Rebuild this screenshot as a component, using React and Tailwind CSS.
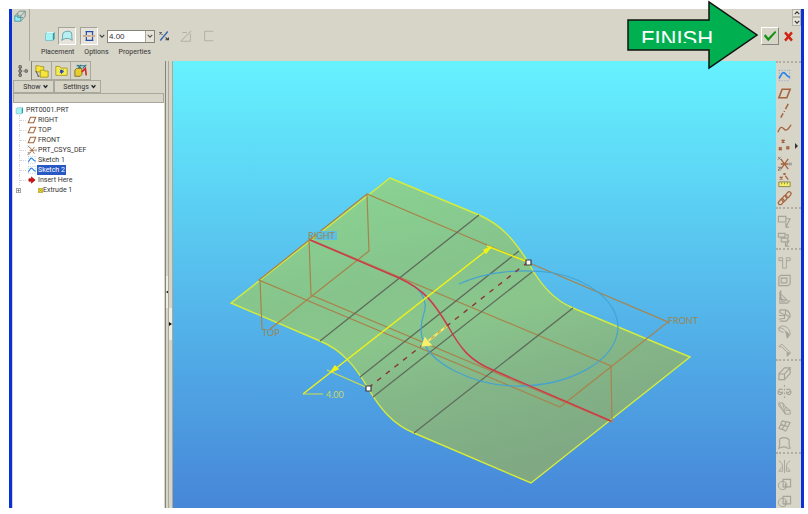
import React, { useState } from 'react';

const Icon = ({ children, className = 'size-4' }) => (
    <svg viewBox="0 0 16 16" className={className} fill="none" stroke="currentColor" strokeWidth="1">
        {children}
    </svg>
);

const PlaneIcon = ({ className }) => (
    <Icon className={className}>
        <path d="M5.5 3.5H14L10.5 12.5H2Z" stroke="#a5643c" strokeWidth="1.7" />
    </Icon>
);

const SketchIcon = ({ className }) => (
    <Icon className={className}>
        <path d="M2.5 2v12M13.5 2v12M2 2.5h12M2 13.5h12" stroke="#7d9cc8" strokeDasharray="1 2" />
        <path d="M2 11C4 10 4.500 5 7 5s3 5 7 5" stroke="#2a86e8" strokeWidth="1.800" />
    </Icon>
);

const CsysIcon = ({ className }) => (
    <Icon className={className}>
        <path d="M4 3l8 11M12 3L4 14M4 8.500h8" stroke="#a5643c" strokeWidth="1.400" />
        <path d="M1 1l3 3M4 1L1 4M1 12h3l-3 3h3M13 7v3M15 7v3" stroke="#777" />
    </Icon>
);

const PartIcon = ({ className }) => (
    <Icon className={className}>
        <path d="M2 4.500L4 2.500H14V12L12 14V4.500Z" fill="#0a8a94" stroke="none" />
        <path d="M2 4.500H12V14H2Z" fill="#a4f4f6" stroke="#6fb9c0" />
        <path d="M2 4.500L4 2.500H14L12 4.500Z" fill="#d8ffff" stroke="none" />
    </Icon>
);

const treeItems = [
    { name: 'RIGHT', icon: <PlaneIcon className="size-[10px]" /> },
    { name: 'TOP', icon: <PlaneIcon className="size-[10px]" /> },
    { name: 'FRONT', icon: <PlaneIcon className="size-[10px]" /> },
    { name: 'PRT_CSYS_DEF', icon: <CsysIcon className="size-[10px]" /> },
    { name: 'Sketch 1', icon: <SketchIcon className="size-[10px]" /> },
    { name: 'Sketch 2', icon: <SketchIcon className="size-[10px]" /> },
    {
        name: 'Insert Here',
        icon: (
            <Icon className="size-[10px]">
                <path d="M3 6h4V3l6 5-6 5v-3H3Z" fill="#d81010" stroke="#a00000" />
            </Icon>
        ),
    },
];

const toolGroups = [
    {
        color: 'text-[#a5643c]',
        height: 'h-[140px]',
        tools: [
            { name: 'Sketch', icon: <SketchIcon className="size-[15px]" /> },
            { name: 'Plane', icon: <PlaneIcon className="size-[15px]" /> },
            { name: 'Axis', icon: <Icon className="size-[15px]"><path d="M12 1L9 6.500M8 8.500L7.500 9.500M6.500 11L4 15.500" strokeWidth="1.600" /></Icon> },
            { name: 'Curve', icon: <Icon className="size-[15px]"><path d="M1 12C4 4 6 7 8 9s4 0 7-5" strokeWidth="1.500" /></Icon> },
            {
                name: 'Point',
                more: true,
                icon: (
                    <Icon className="size-[15px]">
                        <path d="M5 2l3 3M8 2L5 5M2 10l3 3M5 10l-3 3M10 9l3 3M13 9l-3 3" strokeWidth="1.700" />
                    </Icon>
                ),
            },
            { name: 'Coordinate System', icon: <CsysIcon className="size-[15px]" /> },
            {
                name: 'Analysis',
                icon: (
                    <Icon className="size-[15px]">
                        <path d="M7 0l2 2M9 0L7 2M3 4l3 3M6 4L3 7M9 3l3 4" strokeWidth="1.400" />
                        <path d="M2 9.500h12v5H2Z" fill="#f4f06a" stroke="#85854c" />
                        <path d="M5 10v2M8 10v2M11 10v2" stroke="#85854c" />
                    </Icon>
                ),
            },
            {
                name: 'Reference',
                icon: (
                    <Icon className="size-[15px]">
                        <g strokeWidth="1.300">
                            <rect x="1" y="9.500" width="7" height="4" rx="2" transform="rotate(-50 4.500 11.500)" />
                            <rect x="4.500" y="6" width="7" height="4" rx="2" transform="rotate(-50 8 8)" />
                            <rect x="8.500" y="2" width="7" height="4" rx="2" transform="rotate(-50 12 4)" />
                        </g>
                    </Icon>
                ),
            },
        ],
    },
    {
        color: 'text-[#a5a498]',
        height: 'h-[35px]',
        tools: [
            { name: 'Annotation', icon: <Icon className="size-[15px]"><path d="M1.500 2.500h8v6h-8ZM10 5h4L10 13M9.500 9.500V14H13" strokeWidth="1.200" /></Icon> },
            { name: 'Annotation Set', icon: <Icon className="size-[15px]"><path d="M1.500 1.500h7v4h-7ZM4.500 6.500h7v4h-7ZM9 3h3v3M13 9l-3 5M9 11v4h4" strokeWidth="1.200" /></Icon> },
        ],
    },
    {
        color: 'text-[#a5a498]',
        height: 'h-[105px]',
        tools: [
            { name: 'Hole', icon: <Icon className="size-[15px]"><path d="M2 3h4v3M14 3h-4v3M6 6v8h4V6M2 3v3h4M14 3v3h-4" /></Icon> },
            { name: 'Shell', icon: <Icon className="size-[15px]"><path d="M2 4.500l2-2h10v9l-2 2H2ZM4.500 5.500h6v5h-6Z" strokeWidth="1.200" /></Icon> },
            { name: 'Rib', icon: <Icon className="size-[15px]"><path d="M3 2l1-1v9l7 1M3 2v12h8l3-3M4 4l8 8M5 8v4h4" strokeWidth="1.100" /></Icon> },
            { name: 'Draft', icon: <Icon className="size-[15px]"><path d="M3 2l6 0c3 1 5 4 5 7l-4 5H3M3 2v3l5 2v4l-6 1M9 2v5l4 2M2 8h6" strokeWidth="1.200" /></Icon> },
            { name: 'Round', icon: <Icon className="size-[15px]"><path d="M2 3l3-2c6 0 9 4 9 9l-3 4M2 3c5 0 7 3 8 7l1 4M2 3v3l5 2" /><path d="M10 7l3 3-2 4Z" fill="currentColor" /></Icon> },
            { name: 'Chamfer', icon: <Icon className="size-[15px]"><path d="M2 4l3-3 9 9-3 4M2 4h3l6 6v4" /><path d="M11 10l3 1-3 3Z" fill="currentColor" /></Icon> },
        ],
    },
    {
        color: 'text-[#a5a498]',
        height: 'h-[87px]',
        tools: [
            { name: 'Extrude', icon: <Icon className="size-[15px]"><path d="M2 8.500h6v6H2ZM2 8.500L8 2h6L8 8.500M14 2v6l-6 6.500" strokeWidth="1.200" /></Icon> },
            { name: 'Revolve', icon: <Icon className="size-[15px]"><path d="M8 1v2M8 5v2M8 9v2M8 13v2M6 6C2 4 0 8 2 11c3 1 4-1 4-3M10 6c4-2 6 2 4 5-3 1-4-1-4-3M2 8l4 2M14 8l-4 2" strokeWidth="1.200" /></Icon> },
            { name: 'Sweep', icon: <Icon className="size-[15px]"><path d="M2 2l4 0 3 4 5 4v4H9ZM2 2v3l7 9M6 2l3 12M9 6l1 4h4" /></Icon> },
            { name: 'Boundary Blend', icon: <Icon className="size-[15px]"><path d="M2 10C5 5 4 3 6 2c4 2 5 0 8 2-2 2-2 6-5 9-3-3-4-1-7-3ZM4 6c4 2 5 0 8 3M10 3C8 6 8 8 5 11" strokeWidth="1.200" /></Icon> },
            { name: 'Style', icon: <Icon className="size-[15px]"><path d="M2 13C4 9 2 6 3 3c4-2 8-1 10 1 0 3-1 5 1 9l-3 0c-3-3-6-1-9 0Z" strokeWidth="1.200" /></Icon> },
        ],
    },
    {
        color: 'text-[#a5a498]',
        height: 'h-[52px]',
        tools: [
            { name: 'Mirror', icon: <Icon className="size-[15px]"><path d="M8 1v14M2 2c4 2 4 5 4 11H2M14 2c-4 2-4 5-4 11h4M2 13l3-4M14 13l-3-4" /></Icon> },
            { name: 'Merge', icon: <Icon className="size-[15px]"><circle cx="6" cy="9" r="4.500" /><path d="M6.500 2.500h8v8h-8ZM9 7v6" strokeWidth="1.200" /></Icon> },
            { name: 'Trim', icon: <Icon className="size-[15px]"><circle cx="6" cy="9" r="4.500" /><path d="M6.500 2.500h8v8h-8ZM9 7v6" strokeWidth="1.200" /></Icon> },
        ],
    },
];

const Dashboard = () => {
    const [depth, setDepth] = useState('4.00');

    return (
        <header className="flex h-[52px] shrink-0 items-start">
            <div className="h-full w-[18px] border-r border-[#aaa89b] pt-px pl-0.5">
                <Icon className="size-3">
                    <path d="M1 8h8v7H1Z" fill="#8eeaf0" stroke="#4b9ca5" strokeWidth="1.200" />
                    <path d="M1 8L7 1.500h8L9 8M15 1.500V8L9 15M5 4v6h7" stroke="#6d8f93" strokeWidth="1.200" />
                </Icon>
            </div>
            <div className="flex flex-col pt-[18px] pl-[11px]">
                <div className="flex h-[18px] items-center">
                    <button aria-label="Solid" className="flex w-[17px] justify-center">
                        <PartIcon className="size-3" />
                    </button>
                    <button aria-label="Surface" className="flex h-[18px] w-[18px] items-center justify-center border border-[#a5a397] border-r-white border-b-white bg-[#e5e3da]">
                        <Icon className="size-[14px]">
                            <path d="M2 13C4 9 2 6 4 4c3-2 7-2 9 0 1 3 0 5 1 9-4-3-8-3-12 0Z" fill="#b8f0f2" stroke="#5a9ba4" />
                        </Icon>
                    </button>
                    <button aria-label="Symmetric depth" className="ml-1 flex h-[18px] w-[18px] items-center justify-center border border-[#a5a397] border-r-white border-b-white bg-[#e5e3da]">
                        <Icon className="size-[14px]">
                            <path d="M5 3v4M12 3v4M5 9v4M12 9v4M4 3h9M4 13h9" stroke="#2550a8" strokeWidth="1.400" />
                            <path d="M1 8h15" stroke="#b4642c" strokeDasharray="4 1" />
                        </Icon>
                    </button>
                    <button aria-label="Depth options" className="flex w-2 justify-center">
                        <Icon className="size-[6px]"><path d="M2 5l6 6 6-6" stroke="#444" strokeWidth="3" /></Icon>
                    </button>
                    <div className="ml-px flex h-[13px] w-12 border border-[#85847b] bg-white">
                        <input
                            aria-label="Depth"
                            value={depth}
                            onChange={(e) => setDepth(e.target.value)}
                            className="w-0 grow px-px text-[8px] leading-[11px] outline-none"
                        />
                        <button aria-label="Depth values" className="flex w-[9px] items-center justify-center border-l border-[#aaa89b] bg-[#e5e3da]">
                            <Icon className="size-[6px]"><path d="M2 5l6 6 6-6" stroke="#555" strokeWidth="3" /></Icon>
                        </button>
                    </div>
                    <button aria-label="Flip direction" className="ml-[3px]">
                        <Icon className="size-3">
                            <path d="M13 2L3 14" stroke="#3564b4" strokeWidth="1.800" />
                            <path d="M2 3l4 3M2 6l3-3M10 10l4 3M10 13h4v-3" stroke="#444" strokeWidth="1.400" />
                        </Icon>
                    </button>
                    <button aria-label="Remove material" disabled className="ml-[9px] text-[#b3b1a5]">
                        <Icon className="size-[14px]"><path d="M2 14L14 2M4 4h5M13 5v9H2" strokeWidth="1.200" /></Icon>
                    </button>
                    <button aria-label="Thicken" disabled className="ml-[9px] text-[#b3b1a5]">
                        <Icon className="size-[14px]"><path d="M13 2.500H3v11h10" strokeWidth="1.200" /></Icon>
                    </button>
                </div>
                <nav className="flex gap-[10px] pt-px font-['Roboto',sans-serif] text-[7px] leading-3">
                    <button>Placement</button>
                    <button>Options</button>
                    <button>Properties</button>
                </nav>
            </div>
            <div className="ml-auto flex items-center gap-1 pt-[18px]">
                <button aria-label="Accept" className="flex size-[18px] items-center justify-center border border-white border-r-[#85847b] border-b-[#85847b]">
                    <Icon className="size-[14px]"><path d="M1 8l2-2 3 4 8-8 1 2-9 10Z" fill="#12930f" stroke="none" /></Icon>
                </button>
                <button aria-label="Cancel" className="w-[10px]">
                    <Icon className="size-[11px]"><path d="M3 2l10 12M13 2L3 14" stroke="#d02412" strokeWidth="3.500" /></Icon>
                </button>
            </div>
            <div className="-ml-px flex flex-col">
                <button aria-label="Scroll up" className="flex h-2 w-[9px] items-center justify-center border border-[#b5b3a8] bg-[#e5e3da]">
                    <Icon className="size-[6px]"><path d="M2 11l6-6 6 6" stroke="#333" strokeWidth="3" /></Icon>
                </button>
                <button aria-label="Scroll down" className="flex h-[9px] w-[9px] items-center justify-center border border-[#b5b3a8] bg-[#e5e3da]">
                    <Icon className="size-[6px]"><path d="M2 5l6 6 6-6" stroke="#333" strokeWidth="3" /></Icon>
                </button>
            </div>
        </header>
    );
};

const ModelTree = () => {
    const [selected, setSelected] = useState('Sketch 2');

    return (
        <aside className="flex w-[153px] shrink-0 flex-col pl-px font-['Roboto',sans-serif] text-[7px] leading-[10px]">
            <div className="flex h-[19px] shrink-0">
                <button aria-label="Model Tree" className="flex w-[19px] items-center justify-center border-r border-[#85847b]">
                    <Icon className="size-3">
                        <path d="M4 1h3v3H4ZM4 6.500h3v3H4ZM4 12h3v3H4ZM12 6.500h3v3h-3ZM5.500 4v2.500M5.500 9.500V12M9 8h1" stroke="#444" strokeWidth="1.200" />
                    </Icon>
                </button>
                <button aria-label="Folder Browser" className="flex w-[20px] items-center justify-center border-y border-r border-[#aaa89b]">
                    <Icon className="size-[14px]">
                        <path d="M1 2h4l1 1h4v6H1Z" fill="#f6e63c" stroke="#a89420" />
                        <path d="M6 7h4l1 1h4v7H6Z" fill="#f6e63c" stroke="#a89420" />
                        <path d="M1 8l3 6M3 14h2" stroke="#444" />
                    </Icon>
                </button>
                <button aria-label="Favorites" className="flex w-[19px] items-center justify-center border-y border-r border-[#aaa89b]">
                    <Icon className="size-[13px]">
                        <path d="M1 3h5l1 2h8v9H1Z" fill="#f6ee50" stroke="#a89420" />
                        <path d="M8 7v5M6 9h5M6 7l4 4M10 7l-4 4" stroke="#2040c0" strokeWidth="1.200" />
                    </Icon>
                </button>
                <button aria-label="Connections" className="flex w-[20px] items-center justify-center border-y border-r border-[#aaa89b]">
                    <Icon className="size-[14px]">
                        <path d="M1 7l2-2h6v7l-2 2H1Z" fill="#e8cc30" stroke="#806818" />
                        <path d="M3 2h11M4 1l4 4M8 1L5 5M10 5l4-4" stroke="#287888" strokeWidth="1.300" />
                        <path d="M9 9l4-4 1 8" stroke="#c82828" strokeWidth="1.800" />
                    </Icon>
                </button>
            </div>
            <div className="flex h-[13px] shrink-0">
                <button className="flex w-[41px] items-center justify-center gap-0.5 border border-[#aaa89b] pl-1">
                    Show
                    <Icon className="size-[5px]"><path d="M2 4l6 7 6-7" stroke="#222" strokeWidth="4" /></Icon>
                </button>
                <button className="flex w-[47px] items-center justify-center gap-0.5 border border-[#aaa89b] pl-1">
                    Settings
                    <Icon className="size-[5px]"><path d="M2 4l6 7 6-7" stroke="#222" strokeWidth="4" /></Icon>
                </button>
            </div>
            <div className="h-[10px] w-[151px] shrink-0 border border-[#aaa89b]" />
            <div className="w-[151px] grow bg-white pt-0.5 pl-0.5">
                <div className="flex items-center gap-0.5">
                    <PartIcon className="size-[9px]" />
                    PRT0001.PRT
                </div>
                <ul className="ml-1">
                    {treeItems.map((item) => (
                        <li key={item.name} className="flex h-[10px] items-center">
                            <span className="h-full border-l border-dotted border-[#d4d4d4]" />
                            <span className="mr-px w-1.5 border-t border-dotted border-[#d4d4d4]" />
                            {item.icon}
                            <button
                                onClick={() => setSelected(item.name)}
                                className={item.name === selected ? 'bg-[#2858c4] px-px text-white' : 'px-px'}
                            >
                                {item.name}
                            </button>
                        </li>
                    ))}
                </ul>
                <div className="flex items-center">
                    <button aria-label="Expand Extrude 1" className="ml-px flex size-[5px] items-center justify-center">
                        <Icon className="size-[5px]"><path d="M1 1h14v14H1ZM4 8h8M8 4v8" stroke="#555" strokeWidth="2" /></Icon>
                    </button>
                    <span className="ml-[17px] flex items-center">
                        <Icon className="size-[5px]"><path d="M1 1h14v14H1Z" fill="#f0e020" stroke="#888820" strokeWidth="2" /><path d="M3 3l10 10M13 3L3 13" stroke="#555" /></Icon>
                        Extrude 1
                    </span>
                </div>
            </div>
        </aside>
    );
};

const Viewport = () => (
    <main className="min-w-0 grow bg-linear-to-b from-[#66f2ff] via-[#56bcec] to-[#4786d8]">
        <svg viewBox="173 61 603 447" className="block size-full" fill="none">
            <defs>
                <linearGradient id="surface" gradientUnits="userSpaceOnUse" x1="400" y1="180" x2="480" y2="480">
                    <stop offset="0" stopColor="#8ad192" />
                    <stop offset="0.300" stopColor="#86c48c" />
                    <stop offset="0.480" stopColor="#8ac68c" />
                    <stop offset="0.700" stopColor="#84b688" />
                    <stop offset="1" stopColor="#7fa883" />
                </linearGradient>
            </defs>
            <path
                d="M390 178L479 215C502 225 515 241 528 262C538 281 551 299 573 308L690 357L531 483L414 433C392 424 379 407 368 388C355 366 342 350 320 341L231 303Z"
                fill="url(#surface)"
                stroke="#d6ec3a"
                strokeWidth="1.400"
            />

            {/* datum planes */}
            <g stroke="#a8834a" strokeWidth="1.200">
                <path d="M259 280L367 194L668 322L560 407Z" />
                <path d="M367 195L369 251L270 329M260 280L262 329" />
                <path d="M309 239L611 366L612 422L311 295Z" />
            </g>

            {/* tangent edges */}
            <path d="M479 215L320 341M519 251L360 377M532 272L373 397M573 308L414 433" stroke="#5f6b5c" strokeWidth="1.300" />

            {/* spline sketch */}
            <path
                d="M459 284C485 272 520 268 554 273C590 280 618 302 618 328C616 362 568 387 514 386C474 385 428 364 422 337C418 319 427 313 425 304C424 296 421 291 414 286"
                stroke="#46a3cf"
                strokeWidth="1.200"
            />
            <path d="M310 240L399 278C425 290 434 303 448 326C460 348 470 361 493 370L611 421" stroke="#cd3a4c" strokeWidth="1.500" />
            <path d="M528 262L368 388" stroke="#8a3438" strokeWidth="1.400" strokeDasharray="5 6" />

            {/* depth dimension */}
            <g stroke="#f2f214" strokeWidth="1.400">
                <path d="M303 394L491 247M487 246L528 262" />
                <path d="M303 394H323M327 370L368 388" stroke="#cfe045" strokeWidth="1.200" />
                <path d="M491 247L484 250L486 253ZM331 372L335 366L338 369Z" fill="#f2f214" />
                <path d="M447 326L428 341" stroke="#f6f06a" strokeWidth="2" />
                <path d="M422 346L425 338L427 341L431 345Z" fill="#f6f06a" stroke="#f6f06a" />
                <path d="M447 326L428 341" stroke="#c88530" strokeWidth="1" strokeDasharray="4 4" />
            </g>
            <path d="M526 260h5v5h-5ZM366 386h5v5h-5Z" fill="#fff" stroke="#3c3c3c" strokeWidth="1.200" />

            <rect x="316" y="231" width="21" height="9" fill="#5cc0e2" />
            <g fontFamily="Lato, sans-serif" fontSize="9" fill="#958754">
                <text x="308" y="239">RIGHT</text>
                <text x="262" y="336">TOP</text>
                <text x="668" y="324">FRONT</text>
                <text x="326" y="398" fill="#c5d868">4.00</text>
            </g>
        </svg>
    </main>
);

const Splitter = () => (
    <div className="flex w-2 shrink-0 border-r border-l border-[#85847b] border-r-[#aaa89b]">
        <div className="flex w-[3px] flex-col border-r border-[#aaa89b] pt-[215px]">
            <button aria-label="Collapse tree" className="flex h-8 items-center justify-center bg-[#eeede6]">
                <svg viewBox="0 0 3 4" className="h-1 w-[3px]" fill="#111"><path d="M3 0v4L0 2Z" /></svg>
            </button>
        </div>
        <div className="flex w-[3px] flex-col pt-[247px]">
            <button aria-label="Expand tree" className="flex h-8 items-center justify-center bg-[#eeede6]">
                <svg viewBox="0 0 3 4" className="h-1 w-[3px]" fill="#111"><path d="M0 0v4l3-2Z" /></svg>
            </button>
        </div>
    </div>
);

const FeatureBar = () => (
    <aside className="flex w-[25px] shrink-0 flex-col overflow-hidden">
        {toolGroups.map((group, index) => (
            <div key={index} className={`shrink-0 border-t-2 border-dotted border-[#b0aea2] pt-1 ${group.color}`}>
                <div className={`flex flex-col justify-between ${group.height}`}>
                    {group.tools.map((tool) => (
                        <button key={tool.name} aria-label={tool.name} className="flex h-[17px] items-center gap-0.5 pl-px">
                            {tool.icon}
                            {tool.more && (
                                <svg viewBox="0 0 4 6" className="ml-px h-1.5 w-1" fill="#333"><path d="M0 0l3 3-3 3Z" /></svg>
                            )}
                        </button>
                    ))}
                </div>
            </div>
        ))}
    </aside>
);

const FinishArrow = () => (
    <div className="absolute top-0 right-[50px] h-[70px] w-[131px]">
        <svg viewBox="0 0 131 70" className="size-full">
            <path d="M1 20H82V2L130 35L82 68V50H1Z" fill="#00b050" stroke="#111" strokeWidth="1.500" />
        </svg>
        {/* the label box is shorter than its text */}
        <div className="absolute top-[31px] left-[14px] h-3 overflow-hidden font-['Liberation_Sans',sans-serif] text-[22px] leading-4 text-white">
            FINISH
        </div>
    </div>
);

const App = () => {
    return (
        <div className="relative h-screen overflow-hidden bg-white pt-[9px] pr-1 pb-1.5 pl-[9px]">
            <div className="flex h-full flex-col border-x-3 border-[#0a30d8] bg-[#d7d4c8] font-['Liberation_Sans',sans-serif] text-[#333]">
                <Dashboard />
                <div className="flex min-h-0 grow">
                    <ModelTree />
                    <Splitter />
                    <Viewport />
                    <FeatureBar />
                </div>
            </div>
            <FinishArrow />
        </div>
    );
};

export default App;
